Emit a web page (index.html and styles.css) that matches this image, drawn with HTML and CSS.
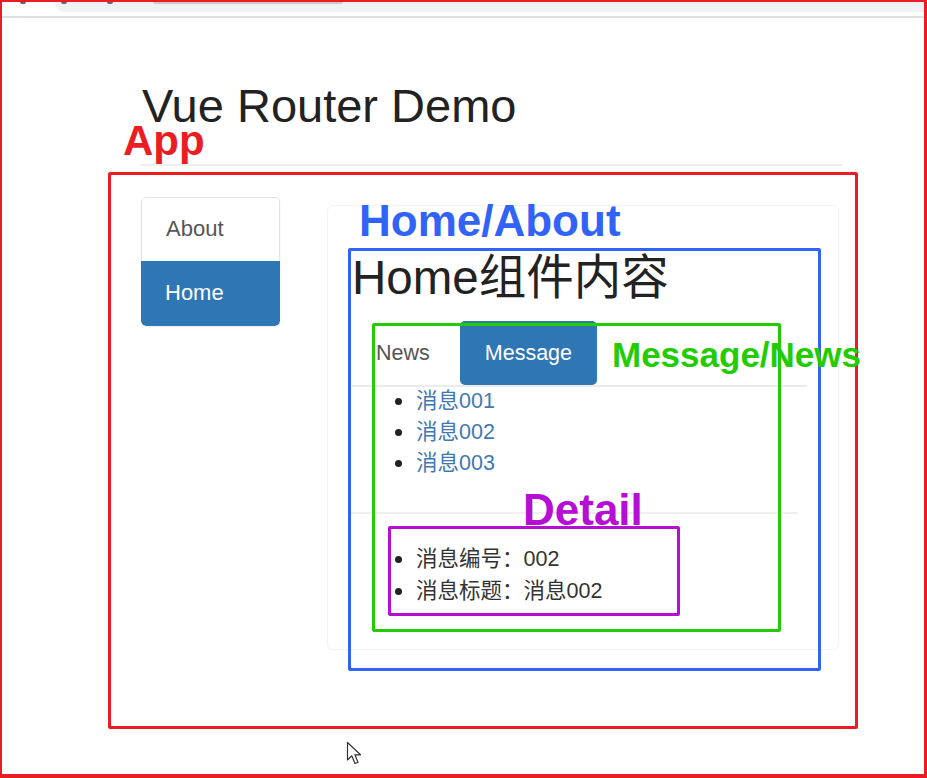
FILE: index.html
```html
<!DOCTYPE html>
<html lang="zh-CN">
<head>
<meta charset="utf-8">
<title>Vue Router Demo</title>
<link rel="stylesheet" href="styles.css">
</head>
<body>
<div class="frame">
  <div class="chrome">
    <div class="chrome-left"><span class="dot"></span></div>
    <div class="urlbar"><span class="dot"></span><span class="dot dot2"></span><span class="urltext"></span></div>
  </div>

  <div class="container">
    <h1 class="title">Vue Router Demo</h1>
    <div class="row">
      <ul class="side-nav">
        <li class="side-item">About</li>
        <li class="side-item active">Home</li>
      </ul>
      <div class="panel">
        <h2 class="home-title">Home组件内容</h2>
        <ul class="tabs">
          <li class="tab">News</li>
          <li class="tab active">Message</li>
        </ul>
        <ul class="bullets links">
          <li><a>消息001</a></li>
          <li><a>消息002</a></li>
          <li><a>消息003</a></li>
        </ul>
        <div class="divider"></div>
        <ul class="bullets detail">
          <li>消息编号：002</li>
          <li>消息标题：消息002</li>
        </ul>
      </div>
    </div>
  </div>

  <div class="box box-app"></div>
  <div class="label label-app">App</div>
  <div class="box box-home"></div>
  <div class="label label-home">Home/About</div>
  <div class="box box-msg"></div>
  <div class="label label-msg">Message/News</div>
  <div class="box box-detail"></div>
  <div class="label label-detail">Detail</div>

  <svg class="cursor" width="18" height="26" viewBox="0 0 18 26">
    <path d="M1.5 1.5 L1.5 19 L5.8 14.8 L9 22.5 L12 21.2 L8.9 13.8 L14.5 13.8 Z" fill="#fff" stroke="#333" stroke-width="1.2" stroke-linejoin="round"/>
  </svg>
</div>
</body>
</html>
```

FILE: styles.css
```css
* { box-sizing: border-box; }

html, body {
  margin: 0;
  padding: 0;
  background: #fff;
}

body {
  font-family: "Liberation Sans", Arial, "Noto Sans CJK SC", sans-serif;
  color: #333;
}

.frame {
  position: relative;
  width: 927px;
  height: 778px;
  border: 2px solid #ec1c24;
  border-right-width: 3px;
  border-bottom-width: 4px;
  overflow: hidden;
  background: #fff;
}

/* browser chrome remnant */
.chrome {
  display: flex;
  height: 16px;
  border-bottom: 2px solid #dedfe0;
}

.chrome-left {
  width: 53px;
}

.urlbar {
  flex: 1;
  height: 10px;
  background: #eff1f3;
  border-bottom-left-radius: 9px;
  display: flex;
  align-items: flex-start;
  padding-left: 6px;
  gap: 40px;
}

.dot {
  display: block;
  width: 6px;
  height: 2px;
  background: #666;
  border-radius: 0 0 3px 3px;
  margin-left: 18px;
}

.urlbar .dot { margin-left: 0; }

.urltext {
  display: block;
  width: 190px;
  height: 2px;
  background: #c9cbce;
  border-radius: 0 0 2px 2px;
}

.container {
  margin-left: 138px;
  width: 702px;
}

.title {
  margin: 68px 0 0 0;
  padding: 0 0 39px 2px;
  font-size: 47px;
  line-height: 39px;
  font-weight: 400;
  color: #222;
  border-bottom: 2px solid #eeeeee;
}

.row {
  display: flex;
  align-items: flex-start;
  margin-top: 31px;
}

.side-nav {
  list-style: none;
  margin: 0 0 0 1px;
  padding: 0;
  width: 139px;
  border-radius: 5px;
  overflow: hidden;
  box-shadow: 0 1px 2px rgba(0, 0, 0, 0.08);
}

.side-item {
  height: 64px;
  line-height: 62px;
  padding-left: 24px;
  font-size: 22px;
  color: #555;
  background: #fff;
  border: 1px solid #e3e3e3;
  border-bottom: none;
  border-radius: 5px 5px 0 0;
}

.side-item.active {
  height: 65px;
  line-height: 64px;
  color: #fff;
  background: #2f76b5;
  border: none;
  border-radius: 0 0 5px 5px;
}

.panel {
  margin: 8px 0 0 47px;
  width: 512px;
  border: 1px solid #f3f3f3;
  border-radius: 6px;
  padding: 0 31px 42px 24px;
  box-shadow: 0 1px 2px rgba(0, 0, 0, 0.02);
}

.home-title {
  margin: 47px 0 0 0;
  font-size: 47.5px;
  line-height: 50px;
  font-weight: 400;
  color: #222;
}

.tabs {
  list-style: none;
  margin: 18px 0 0 0;
  padding: 0;
  display: flex;
  gap: 5px;
  border-bottom: 2px solid #ebebeb;
}

.tab {
  height: 64px;
  line-height: 64px;
  padding: 0 25px 0 24px;
  font-size: 21.5px;
  color: #555;
}

.tab.active {
  background: #2f76b5;
  color: #fff;
  border-radius: 5px;
  padding: 0 25px;
  margin-bottom: -1px;
}

.bullets {
  list-style: none;
  margin: 0;
  padding: 0 0 0 43px;
  font-size: 21.5px;
}

.bullets li {
  display: flex;
  align-items: center;
}

.bullets li::before {
  content: "";
  display: block;
  width: 7px;
  height: 7px;
  border-radius: 50%;
  background: #222;
  margin-right: 14px;
  flex: none;
}

.links {
  margin-top: -1px;
  line-height: 31px;
}

.links a {
  color: #3f79b2;
  text-decoration: none;
}

.divider {
  height: 2px;
  background: #efefef;
  margin: 33px 9px 0 -2px;
}

.detail {
  margin-top: 29px;
  line-height: 32px;
  color: #333;
}

/* annotation overlays */
.box {
  position: absolute;
  border: 3px solid;
  border-radius: 2px;
}

.box-app {
  left: 106px;
  top: 170px;
  width: 750px;
  height: 557px;
  border-color: #ec1c24;
}

.box-home {
  left: 346px;
  top: 246px;
  width: 473px;
  height: 423px;
  border-color: #3163f6;
}

.box-msg {
  left: 370px;
  top: 321px;
  width: 409px;
  height: 309px;
  border-color: #22cc00;
}

.box-detail {
  left: 386px;
  top: 524px;
  width: 292px;
  height: 90px;
  border-color: #b50fd4;
}

.label {
  position: absolute;
  font-family: "Liberation Sans", Arial, sans-serif;
  font-weight: 700;
  white-space: nowrap;
}

.label-app {
  left: 121px;
  top: 124px;
  font-size: 42px;
  line-height: 30px;
  color: #ec1c24;
}

.label-home {
  left: 357px;
  top: 197px;
  font-size: 44px;
  line-height: 43px;
  color: #3163f6;
}

.label-msg {
  left: 610px;
  top: 335px;
  font-size: 35px;
  line-height: 35px;
  color: #22cc00;
}

.label-detail {
  left: 521px;
  top: 486px;
  font-size: 44px;
  line-height: 43px;
  color: #b50fd4;
}

.cursor {
  position: absolute;
  left: 344px;
  top: 739px;
}
```
